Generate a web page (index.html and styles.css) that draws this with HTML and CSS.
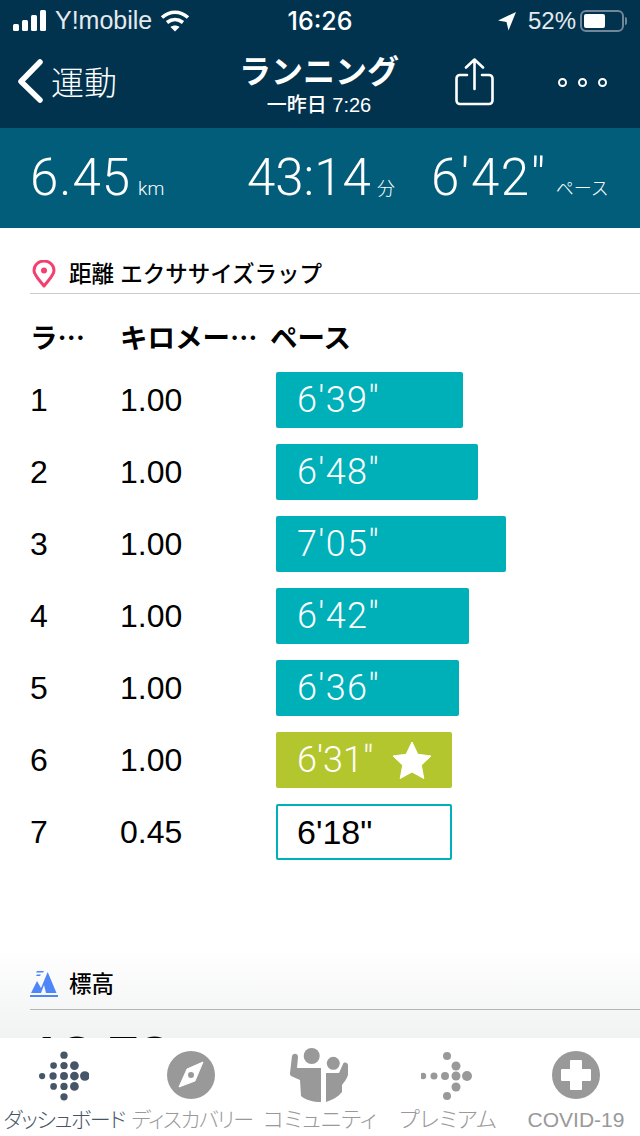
FILE: index.html
```html
<!DOCTYPE html>
<html lang="ja">
<head>
    <meta charset="UTF-8">
    <meta name="viewport" content="width=device-width, initial-scale=1.0">
    <title>ランニング</title>
    <link rel="stylesheet" href="styles.css">
</head>
<body>
<div class="app">
    <header class="top">
        <div class="status-bar">
            <div class="status-left">
                <svg class="signal" width="34" height="22" viewBox="0 0 34 22" fill="#fff">
                    <rect x="0" y="14" width="6" height="7" rx="1.5"/>
                    <rect x="9" y="10" width="6" height="11" rx="1.5"/>
                    <rect x="18" y="5" width="6" height="16" rx="1.5"/>
                    <rect x="27" y="0" width="6" height="21" rx="1.5"/>
                </svg>
                <span class="carrier">Y!mobile</span>
                <svg class="wifi" width="30" height="22" viewBox="0 0 30 22" fill="none" stroke="#fff" stroke-width="3.6">
                    <path d="M2 7.5C10 .5 20 .5 28 7.5"/>
                    <path d="M7 12.5C12 8.5 18 8.5 23 12.5"/>
                    <path d="M15 21.5L10.5 17C13 15 17 15 19.5 17Z" fill="#fff" stroke="none"/>
                </svg>
            </div>
            <div class="clock">16:26</div>
            <div class="status-right">
                <svg width="18" height="20" viewBox="0 0 18 20" fill="#fff"><path d="M18 1L10.5 19.5 8.5 11 0 9.5Z"/></svg>
                <span class="battery-pct">52%</span>
                <div class="battery"><div class="battery-level"></div></div>
                <div class="battery-cap"></div>
            </div>
        </div>
        <nav class="nav-bar">
            <div class="nav-back">
                <svg width="28" height="44" viewBox="0 0 28 44" fill="none" stroke="#fff" stroke-width="5.5" stroke-linecap="round" stroke-linejoin="round"><path d="M23 3L4 22.5 23 41"/></svg>
                <span>運動</span>
            </div>
            <div class="nav-title">
                <div class="nav-heading">ランニング</div>
                <div class="nav-sub">一昨日 7:26</div>
            </div>
            <svg class="nav-share" width="40" height="50" viewBox="0 0 40 50" fill="none" stroke="#fff" stroke-width="2.6" stroke-linecap="round" stroke-linejoin="round">
                <path d="M12 17H5a3.5 3.5 0 0 0-3.5 3.5v22A3.5 3.5 0 0 0 5 46h29a3.5 3.5 0 0 0 3.5-3.5v-22A3.5 3.5 0 0 0 34 17h-7"/>
                <path d="M19.5 31V2M11 9.5L19.5 1.5 28 9.5"/>
            </svg>
            <div class="nav-more"><i></i><i></i><i></i></div>
        </nav>
    </header>

    <section class="stats">
        <div class="stat stat-dist"><b>6.45</b><small>km</small></div>
        <div class="stat stat-time"><b>43:14</b><small>分</small></div>
        <div class="stat stat-pace"><b>6'42"</b><small>ペース</small></div>
    </section>

    <main class="content">
        <div class="section-head">
            <svg class="pin" width="24" height="28" viewBox="0 0 24 28"><path d="M12 26C6.5 19 2 15 2 10.5a10 9.5 0 0 1 20 0C22 15 17.5 19 12 26Z" fill="none" stroke="#f2406f" stroke-width="3" stroke-linejoin="round"/><circle cx="12" cy="10.5" r="3" fill="#f2406f"/></svg>
            <h2>距離 エクササイズラップ</h2>
        </div>
        <div class="lap-head">
            <span class="col-lap">ラ…</span>
            <span class="col-km">キロメー…</span>
            <span class="col-pace">ペース</span>
        </div>
        <div class="lap-row"><span class="col-lap">1</span><span class="col-km">1.00</span><div class="bar" style="width:187px">6'39"</div></div>
        <div class="lap-row"><span class="col-lap">2</span><span class="col-km">1.00</span><div class="bar" style="width:202px">6'48"</div></div>
        <div class="lap-row"><span class="col-lap">3</span><span class="col-km">1.00</span><div class="bar" style="width:230px">7'05"</div></div>
        <div class="lap-row"><span class="col-lap">4</span><span class="col-km">1.00</span><div class="bar" style="width:193px">6'42"</div></div>
        <div class="lap-row"><span class="col-lap">5</span><span class="col-km">1.00</span><div class="bar" style="width:183px">6'36"</div></div>
        <div class="lap-row"><span class="col-lap">6</span><span class="col-km">1.00</span>
            <div class="bar bar-best" style="width:176px">6'31"
                <svg width="40" height="38" viewBox="0 0 40 38" fill="#fff"><path d="M20 1l5.8 12.2 13.2 1.8-9.7 9.2 2.5 13.3L20 31l-11.8 6.5 2.5-13.3L1 15l13.2-1.8Z" stroke="#fff" stroke-width="1" stroke-linejoin="round"/></svg>
            </div>
        </div>
        <div class="lap-row"><span class="col-lap">7</span><span class="col-km">0.45</span><div class="bar bar-partial" style="width:176px">6'18"</div></div>

        <div class="section-head section-elev">
            <svg width="28" height="28" viewBox="0 0 28 28" fill="#4f86f7">
                <path d="M1 23L7 11l4 7L17.7 2 26.5 23H16l-2-8-3 8Z"/>
                <path d="M7 1h7l-1 1.5H6ZM7 4.5h4L10 6H6Z"/>
                <rect x="0" y="25" width="28" height="2"/>
            </svg>
            <h2>標高</h2>
        </div>
        <div class="elev-value">18.78</div>
        <div class="fade"></div>
    </main>

    <footer class="tabs">
        <div class="tab tab-active tab-tight">
            <svg width="50" height="50" viewBox="0 0 48 48" fill="#475569">
                <circle cx="24" cy="4" r="3.5"/>
                <circle cx="14" cy="14" r="3.2"/><circle cx="24" cy="14" r="3.5"/><circle cx="34" cy="14" r="4.2"/>
                <circle cx="3" cy="24" r="3"/><circle cx="13.5" cy="24" r="3.5"/><circle cx="24" cy="24" r="3.8"/><circle cx="34" cy="24" r="4.2"/><circle cx="44" cy="24" r="4.6"/>
                <circle cx="14" cy="34" r="3.2"/><circle cx="24" cy="34" r="3.5"/><circle cx="34" cy="34" r="4.2"/>
                <circle cx="24" cy="44" r="3.5"/>
            </svg>
            <span>ダッシュボード</span>
        </div>
        <div class="tab tab-tight">
            <svg class="icon-compass" width="48" height="48" viewBox="0 0 48 48">
                <circle cx="24" cy="24" r="24" fill="#999"/>
                <path d="M36 11L28 30 12 36 20 18Z" fill="#fff" stroke="#fff" stroke-width="1" stroke-linejoin="round"/>
                <circle cx="24" cy="24" r="3" fill="#999"/>
            </svg>
            <span>ディスカバリー</span>
        </div>
        <div class="tab">
            <svg class="icon-community" width="64" height="56" viewBox="8 8 64 56" fill="#999">
                <circle cx="31.7" cy="16" r="8"/>
                <circle cx="53.3" cy="23.3" r="6.5"/>
                <path d="M12 16C13 13 18 13 18 17L17 28H41V62C33 62 26 60 21 56L20 40 11 36C10 35 10 34 10 33Z"/>
                <path d="M46 33H59L63 24C64 22 67 22 68 25V35C67 39 64 42 62 45V52C58 57 52 60 46 62Z"/>
            </svg>
            <span>コミュニティ</span>
        </div>
        <div class="tab">
            <svg width="54" height="50" viewBox="2 0 54 48" fill="#999">
                <circle cx="28" cy="4" r="4"/>
                <circle cx="37" cy="14" r="4.5"/>
                <circle cx="4" cy="24" r="3.2"/><circle cx="15" cy="24" r="3.5"/><circle cx="26" cy="24" r="4"/><circle cx="37" cy="24" r="4.5"/><circle cx="48" cy="24" r="5"/>
                <circle cx="37" cy="35" r="4.5"/>
                <circle cx="28" cy="44" r="4"/>
            </svg>
            <span>プレミアム</span>
        </div>
        <div class="tab tab-covid">
            <svg width="48" height="48" viewBox="0 0 48 48">
                <circle cx="24" cy="24" r="24" fill="#999"/>
                <path d="M19 9h10a1 1 0 0 1 1 1v8h8a1 1 0 0 1 1 1v10a1 1 0 0 1-1 1h-8v8a1 1 0 0 1-1 1H19a1 1 0 0 1-1-1v-8h-8a1 1 0 0 1-1-1V19a1 1 0 0 1 1-1h8v-8a1 1 0 0 1 1-1Z" fill="#fff"/>
            </svg>
            <span>COVID-19</span>
        </div>
    </footer>
</div>
</body>
</html>
```

FILE: styles.css
```css
* {
    box-sizing: border-box;
}
html, body {
    margin: 0;
    padding: 0;
}
body {
    font-family: "Liberation Sans", "Noto Sans CJK JP", sans-serif;
    color: #000;
    background: #fff;
}
.app {
    width: 640px;
    height: 1136px;
    display: flex;
    flex-direction: column;
    overflow: hidden;
}

/* header */
.top {
    height: 128px;
    background: #01334f;
    color: #fff;
}
.status-bar {
    height: 41px;
    padding: 0 13px;
    display: grid;
    grid-template-columns: 1fr auto 1fr;
    align-items: center;
    font-size: 24px;
}
.status-left {
    display: flex;
    align-items: center;
    gap: 8px;
}
.carrier {
    font-size: 25px;
    color: #e4eaee;
}
.clock {
    font-family: "Inter", "Liberation Sans", sans-serif;
    font-size: 25px;
    font-weight: 500;
}
.status-right {
    display: flex;
    align-items: center;
    justify-content: flex-end;
}
.battery-pct {
    margin: 0 4px 0 12px;
    color: #e4eaee;
}
.battery {
    width: 44px;
    height: 22px;
    border: 2px solid #6f8798;
    border-radius: 6px;
    padding: 2px;
}
.battery-level {
    width: 21px;
    height: 100%;
    background: #fff;
    border-radius: 2px;
}
.battery-cap {
    width: 2px;
    height: 8px;
    margin-left: 1px;
    background: #6f8798;
    border-radius: 0 2px 2px 0;
}
.nav-bar {
    height: 87px;
    position: relative;
    display: flex;
    align-items: center;
    padding: 0 0 8px 17px;
}
.nav-back {
    display: flex;
    align-items: center;
    gap: 6px;
    font-size: 33px;
    font-weight: 300;
}
.nav-title {
    position: absolute;
    left: 199px;
    width: 240px;
    top: 11px;
    text-align: center;
}
.nav-heading {
    font-size: 32px;
    font-weight: 700;
    line-height: 40px;
}
.nav-sub {
    font-size: 20px;
    font-weight: 500;
    line-height: 26px;
}
.nav-share {
    position: absolute;
    left: 455px;
    top: 17px;
}
.nav-more {
    position: absolute;
    left: 558px;
    top: 37px;
    display: flex;
    gap: 11px;
}
.nav-more i {
    width: 9px;
    height: 9px;
    border: 2px solid #fff;
    border-radius: 50%;
}

/* totals */
.stats {
    height: 100px;
    background: #025d7b;
    color: #fff;
    display: flex;
    align-items: baseline;
    padding-top: 20px;
}
.stat {
    display: flex;
    align-items: baseline;
}
.stat b {
    font-family: "Roboto", "Liberation Sans", sans-serif;
    font-weight: 300;
    font-size: 51px;
    line-height: 60px;
}
.stat small {
    font-size: 18px;
    font-weight: 300;
    margin-left: 9px;
}
.stat-dist {
    margin-left: 30px;
    width: 217px;
}
.stat-dist b {
    letter-spacing: 1px;
}
.stat-dist small {
    font-family: "Roboto", "Liberation Sans", sans-serif;
    font-size: 19px;
    margin-left: 7px;
}
.stat-time {
    width: 184px;
}
.stat-time small {
    margin-left: 6px;
}
.stat-pace b {
    letter-spacing: 1.5px;
}

/* laps */
.content {
    flex: 1;
    position: relative;
    isolation: isolate;
    overflow: hidden;
    padding-left: 30px;
}
.section-head {
    display: flex;
    align-items: center;
    gap: 13px;
    height: 66px;
    padding-top: 26px;
    border-bottom: 1px solid #ccc;
}
.section-head h2 {
    margin: 0 0 4px;
    font-size: 22.5px;
    font-weight: 500;
}
.pin {
    margin-left: 2px;
}
.lap-head {
    display: flex;
    height: 60px;
    margin-bottom: 18px;
    align-items: flex-end;
    font-family: "Noto Sans CJK JP", sans-serif;
    font-size: 27.5px;
    line-height: 36px;
    font-weight: 700;
}
.col-lap {
    width: 90px;
    flex: none;
}
.col-km {
    width: 150px;
    flex: none;
}
.col-pace {
    white-space: nowrap;
}
.lap-row {
    display: flex;
    align-items: center;
    height: 56px;
    margin-bottom: 16px;
    font-size: 32px;
}
.lap-row .col-km {
    width: 156px;
}
.bar {
    height: 56px;
    display: flex;
    align-items: center;
    justify-content: space-between;
    padding: 0 20px 0 21px;
    background: #00b0b9;
    color: #fff;
    border-radius: 2px;
    font-family: "Roboto", "Liberation Sans", sans-serif;
    font-size: 36px;
    font-weight: 300;
    letter-spacing: 1.3px;
}
.bar-best {
    background: #b4c62e;
    letter-spacing: 0;
}
.bar-partial {
    background: #fff;
    color: #000;
    border: 2px solid #00b0b9;
    padding-left: 19px;
    font-family: "Liberation Sans", sans-serif;
    font-size: 34px;
    font-weight: 400;
    letter-spacing: 0;
}
.section-elev {
    height: 61px;
    padding-top: 10px;
    margin-top: 89px;
    gap: 11px;
    border-color: #b5b5b5;
}
.elev-value {
    font-size: 56px;
    font-weight: 700;
    line-height: 60px;
    margin-top: 16px;
}
.fade {
    position: absolute;
    z-index: -1;
    left: 0;
    right: 0;
    bottom: 0;
    height: 90px;
    background: linear-gradient(#fff, #f1f2f2);
}

/* tab bar */
.tabs {
    height: 98px;
    background: #fff;
    display: flex;
}
.tab {
    flex: 1;
    display: flex;
    flex-direction: column;
    align-items: center;
    position: relative;
    padding-top: 13px;
    color: #999;
    font-size: 22px;
    font-weight: 300;
    font-feature-settings: "palt";
}
.tab span {
    position: absolute;
    top: 68px;
    line-height: 28px;
    white-space: nowrap;
}
.tab-active {
    color: #475569;
}
.tab-tight {
    font-size: 21px;
    letter-spacing: -1.3px;
}
.tab-covid {
    font-size: 21px;
}
.icon-compass {
    margin-right: 2px;
}
.icon-community {
    margin-top: -3px;
}
```
